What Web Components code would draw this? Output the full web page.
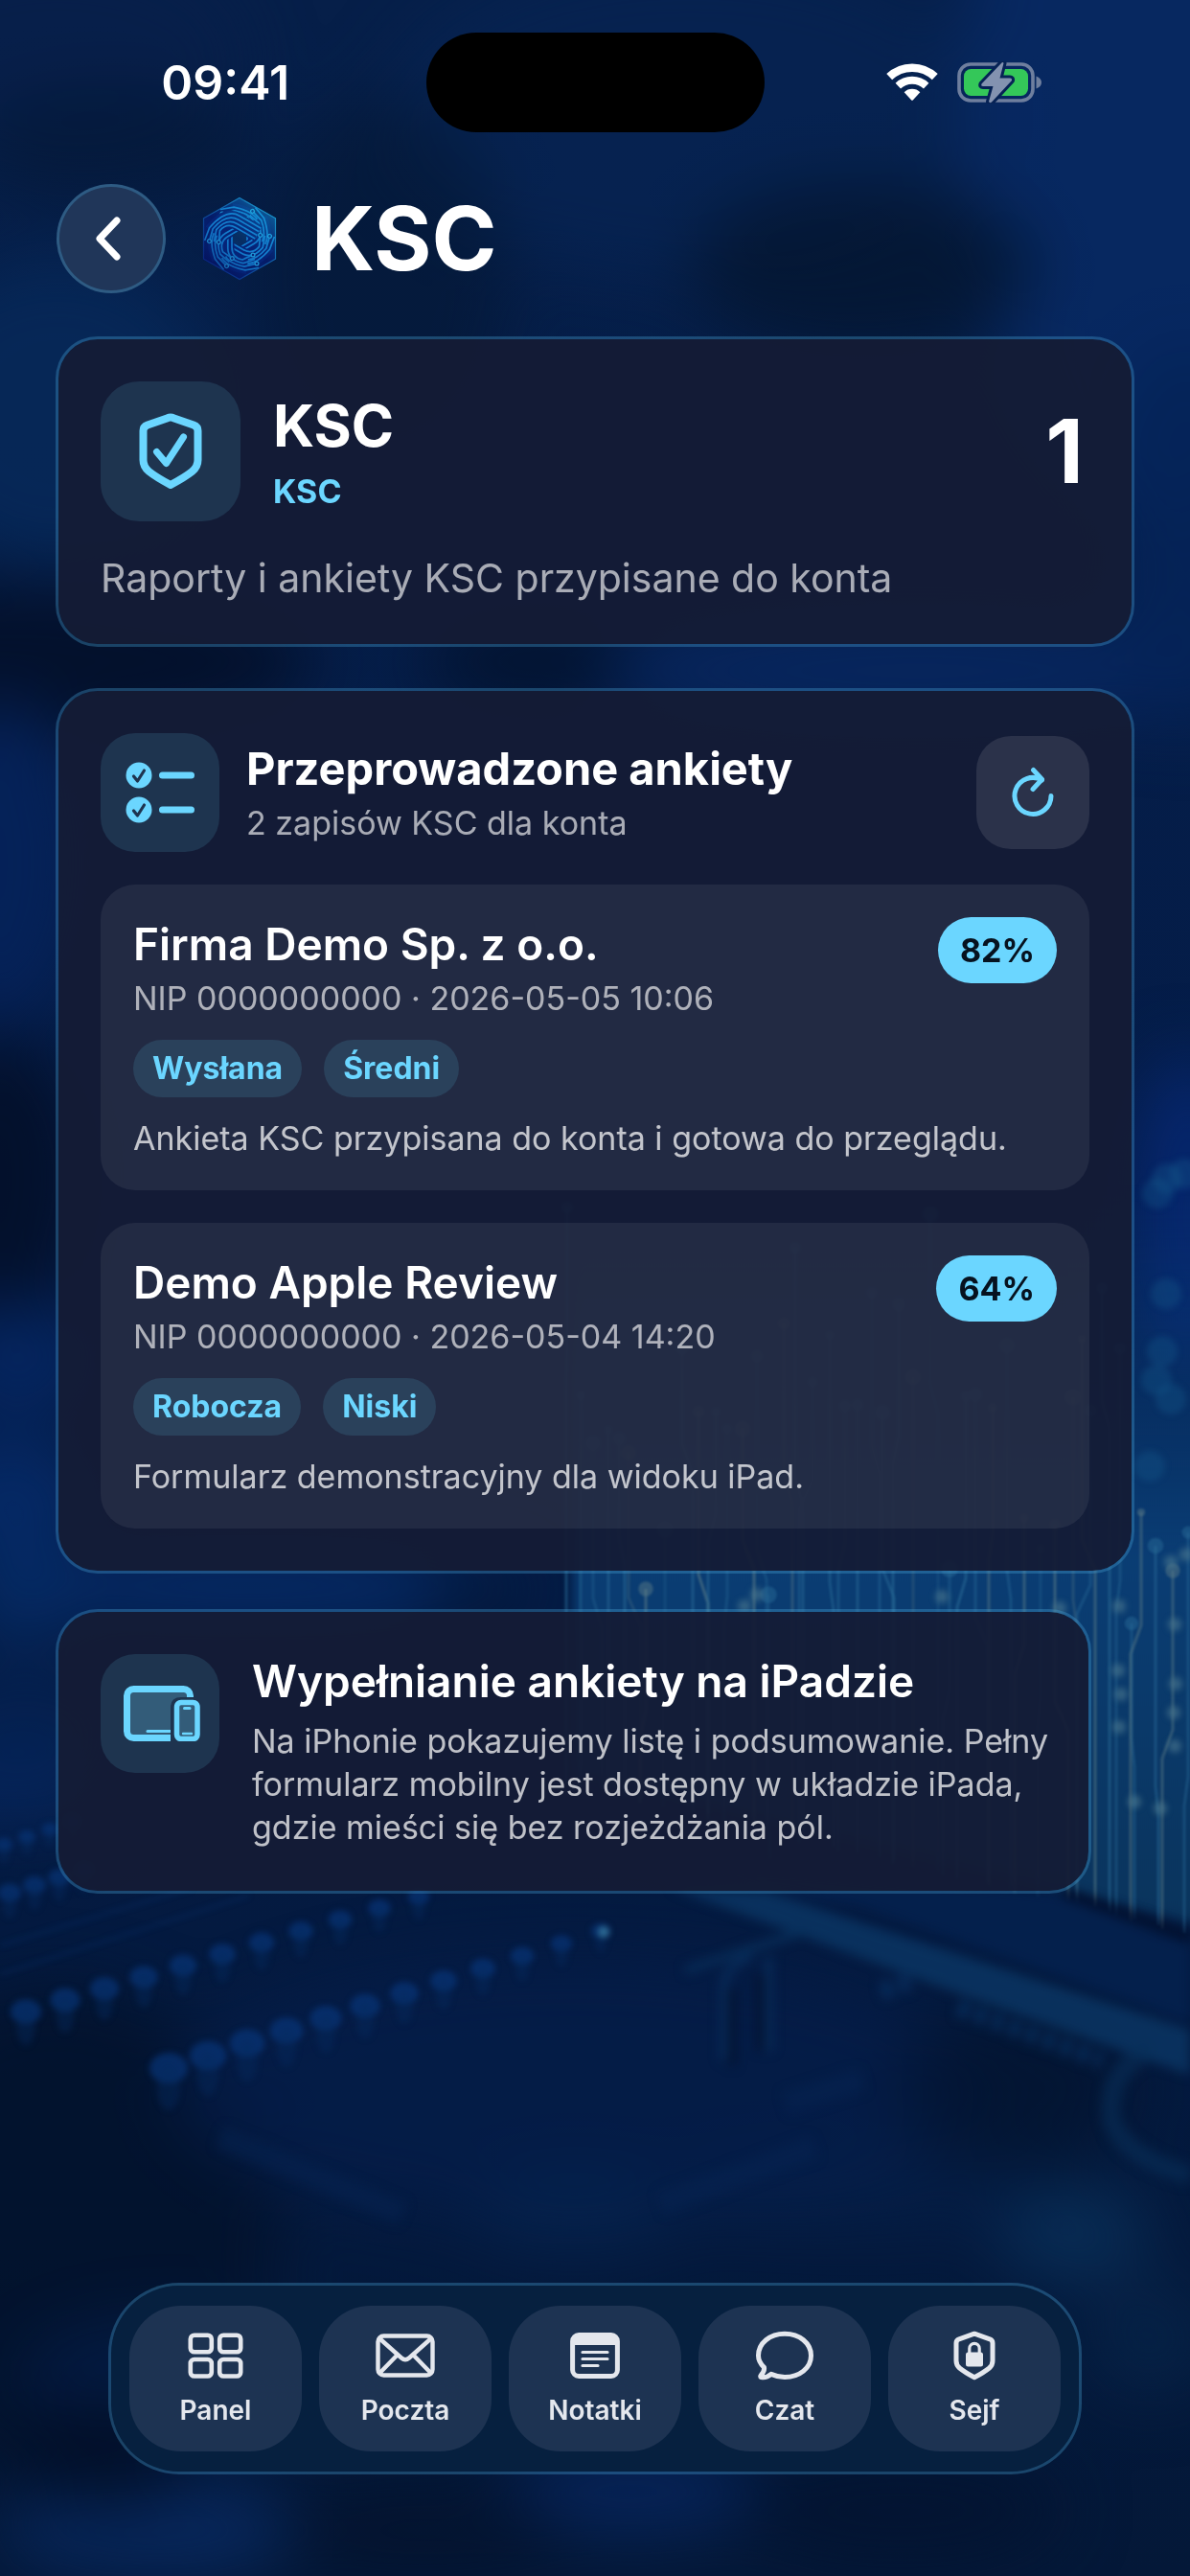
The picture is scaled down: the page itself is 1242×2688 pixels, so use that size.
<!DOCTYPE html>
<html lang="pl">
<head>
<meta charset="utf-8">
<meta name="viewport" content="width=device-width, initial-scale=1">
<title>KSC</title>
<style>
  html, body { margin: 0; }
  body {
    background: #04173a;
    color: #fff;
    font-family: Inter, "Liberation Sans", sans-serif;
    --cyan: #6bd6ff;
    --line: rgba(72, 165, 215, .34);
    --muted: rgba(255, 255, 255, .64);
    --soft: rgba(255, 255, 255, .73);
  }
</style>
</head>
<body>
<ksc-screen>
  <circuit-backdrop slot="backdrop"></circuit-backdrop>
  <status-bar slot="status" time="09:41"></status-bar>
  <page-header slot="header">KSC</page-header>

  <glass-card>
    <summary-block count="1">
      <icon-tile slot="icon" name="shield" size="large"></icon-tile>
      <span slot="title">KSC</span>
      <span slot="tag">KSC</span>
      <span slot="text">Raporty i ankiety KSC przypisane do konta</span>
    </summary-block>
  </glass-card>

  <glass-card>
    <survey-list>
      <icon-tile slot="icon" name="checklist"></icon-tile>
      <span slot="title">Przeprowadzone ankiety</span>
      <span slot="subtitle">2 zapisów KSC dla konta</span>
      <survey-item score="82%" tags="Wysłana,Średni">
        <span slot="title">Firma Demo Sp. z o.o.</span>
        <span slot="meta">NIP 0000000000 · 2026-05-05 10:06</span>
        <span slot="text">Ankieta KSC przypisana do konta i gotowa do przeglądu.</span>
      </survey-item>
      <survey-item score="64%" tags="Robocza,Niski">
        <span slot="title">Demo Apple Review</span>
        <span slot="meta">NIP 0000000000 · 2026-05-04 14:20</span>
        <span slot="text">Formularz demonstracyjny dla widoku iPad.</span>
      </survey-item>
    </survey-list>
  </glass-card>

  <glass-card class="hint" inset>
    <hint-block>
      <icon-tile slot="icon" name="devices"></icon-tile>
      <span slot="title">Wypełnianie ankiety na iPadzie</span>
      <span slot="text">Na iPhonie pokazujemy listę i podsumowanie. Pełny formularz mobilny jest dostępny w układzie iPada, gdzie mieści się bez rozjeżdżania pól.</span>
    </hint-block>
  </glass-card>

  <tab-bar slot="tabs">
    <tab-button icon="grid">Panel</tab-button>
    <tab-button icon="mail">Poczta</tab-button>
    <tab-button icon="note">Notatki</tab-button>
    <tab-button icon="chat">Czat</tab-button>
    <tab-button icon="lock">Sejf</tab-button>
  </tab-bar>
</ksc-screen>

<script>
const ICONS = {
  back: `<svg width="30" height="48" viewBox="0 0 30 48" fill="none" stroke="#fff" stroke-width="7" stroke-linecap="round" stroke-linejoin="round"><path d="M24 5 6 24l18 19"/></svg>`,
  shield: `<svg width="66" height="80" viewBox="0 0 66 80" fill="none" stroke="#6bd6ff" stroke-linecap="round" stroke-linejoin="round"><path stroke-width="8" d="M33 4.500 Q34.500 4.500 36 5.200L57 12.500Q61.500 14.200 61.500 18.500V49Q61.500 56 55.500 61Q48 67 33 75Q18 67 10.500 61Q4.500 56 4.500 49V18.500Q4.500 14.200 9 12.500L30 5.200Q31.500 4.500 33 4.500Z"/><path stroke-width="7" d="M18.500 40.500 28.500 52.500 46.500 25"/></svg>`,
  checklist: `<svg width="72" height="64" viewBox="0 0 72 64" fill="#6bd6ff"><circle cx="14" cy="14" r="13.500"/><circle cx="14" cy="50" r="13.500"/><rect x="35" y="10.500" width="37" height="7" rx="3.500"/><rect x="35" y="46.500" width="37" height="7" rx="3.500"/><g fill="none" stroke="#1e344f" stroke-width="3.200" stroke-linecap="round" stroke-linejoin="round"><path d="M8.500 15 12.500 20 19.500 9"/><path d="M8.500 51 12.500 56 19.500 45"/></g></svg>`,
  refresh: `<svg width="44" height="54" viewBox="0 0 44 54" fill="none" stroke="#6bd6ff" stroke-width="5" stroke-linecap="round" stroke-linejoin="round"><path d="M41 30.500a19 19 0 1 1-9.500-16.500"/><path d="M22.500 3.500 31.500 13.300 22 23.500"/></svg>`,
  devices: `<svg width="84" height="58" viewBox="-4 0 84 58"><rect x="3.500" y="3.500" width="66" height="51" rx="7" fill="#335c79" stroke="#6bd6ff" stroke-width="7"/><path d="M25 47.500H50" stroke="#6bd6ff" stroke-width="3" stroke-linecap="round"/><path d="M49 58V23Q49 12 60 12H80V58Z" fill="#1e344f"/><rect x="55.500" y="17.500" width="21.500" height="38" rx="4.500" fill="#335c79" stroke="#6bd6ff" stroke-width="5.500"/><path d="M63.500 23.500h5.500" stroke="#6bd6ff" stroke-width="3" stroke-linecap="round"/><path d="M62 50h9" stroke="#6bd6ff" stroke-width="2.400" stroke-linecap="round"/></svg>`,
  grid: `<svg width="58" height="48" viewBox="0 0 58 48" fill="none" stroke="#e4e7ed" stroke-width="4.600"><rect x="2.800" y="2.800" width="22" height="17.500" rx="4"/><rect x="33.200" y="2.800" width="22" height="17.500" rx="4"/><rect x="2.800" y="28" width="22" height="17.500" rx="4"/><rect x="33.200" y="28" width="22" height="17.500" rx="4"/></svg>`,
  mail: `<svg width="62" height="46" viewBox="0 0 62 46" fill="none" stroke="#e4e7ed" stroke-width="4.400" stroke-linejoin="round"><rect x="2.500" y="2.500" width="57" height="41" rx="6"/><path d="M4.500 5.500 27 25.500Q31 29 35 25.500L57.500 5.500M4.500 41 22.500 22.500M57.500 41 39.500 22.500"/></svg>`,
  note: `<svg width="52" height="48" viewBox="0 0 52 48" fill="none" stroke="#e4e7ed"><rect x="2.600" y="2.600" width="46.800" height="42.800" rx="6.500" stroke-width="5"/><path d="M3 8Q3 3 9 3H43Q49 3 49 8V13H3Z" fill="#e4e7ed" stroke="none"/><path stroke-width="3.200" stroke-linecap="round" d="M13 20.500H39M13 27.500H39M13 34.500H29"/></svg>`,
  chat: `<svg width="62" height="52" viewBox="0 0 62 52" fill="none" stroke="#e4e7ed" stroke-width="5" stroke-linejoin="round" stroke-linecap="round"><path d="M31 3.200C46.500 3.200 58.500 13 58.500 26S46.500 48.500 31 48.500C26 48.500 21 47.300 16.800 45.400C14 47.800 9.500 49.200 6.500 48.600C5.300 48.200 5.600 47.200 6.300 46.400C8.600 43.700 10 41.200 9.500 38.400C5.500 34.500 3.500 30.500 3.500 26C3.500 13 15.500 3.200 31 3.200Z"/></svg>`,
  lock: `<svg width="44" height="52" viewBox="0 0 44 52" fill="none" stroke="#e4e7ed"><path stroke-width="5" stroke-linejoin="round" d="M22 3.200 23.500 3.700 38 8.800Q41 10 41 13V31.500Q41 36 37.500 39Q32 43.500 22 48.800Q12 43.500 6.500 39Q3 36 3 31.500V13Q3 10 6 8.800L20.500 3.700Z"/><rect x="13" y="22.500" width="18" height="15" rx="2.500" fill="#e4e7ed" stroke="none"/><path stroke-width="3.200" d="M16.800 24V18.500a5.200 5.200 0 0 1 10.400 0V24"/></svg>`,
  wifi: `<svg width="54" height="40" viewBox="0 0 54 40" fill="none" stroke="#fff"><path stroke-width="8.500" d="M3.200 14.200A34.500 34.500 0 0 1 50.800 14.200"/><path stroke-width="8" d="M12.300 23.600A21.500 21.500 0 0 1 41.700 23.600"/><path fill="#fff" stroke="none" d="M18.700 30.200A11.800 11.800 0 0 1 35.300 30.200L28 38.200Q27 39.200 26 38.200Z"/></svg>`,
  battery: `<svg width="90" height="44" viewBox="0 0 90 44"><rect x="2" y="3" width="77" height="38" rx="12" fill="none" stroke="#6f7f9e" stroke-width="3.600"/><rect x="7" y="8" width="67" height="28" rx="7.500" fill="#34c759"/><path d="M82.500 15.500Q88 17.500 88 22T82.500 28.500Z" fill="#6f7f9e"/><path d="M46.500 1.500 25.500 23.500Q24.500 26 27 26H37.500L33 42Q34 44 36 42.500L57 20Q57.500 17.500 55 17.500H44.500L48.500 2Q48 .5 46.500 1.500Z" fill="#8392b0" stroke="#062255" stroke-width="6" paint-order="stroke" stroke-linejoin="round"/></svg>`
};

/** Attaches an open shadow root filled with the given styles and markup. */
function render(host, css, html) {
  const template = document.createElement('template');
  template.innerHTML = `<style>*{box-sizing:border-box}svg{display:block;flex:none}${css}</style>${html}`;
  host.attachShadow({ mode: 'open' }).append(template.content.cloneNode(true));
}

class KscScreen extends HTMLElement {
  constructor() {
    super();
    render(this, `
      :host { display: flex; flex-direction: column; position: relative; min-height: 100vh; overflow: hidden; isolation: isolate; }
      main { display: flex; flex-direction: column; gap: 43px; padding: 45px 58px; }
      ::slotted(.hint) { margin-top: -6px; }
      footer { margin-top: auto; padding: 0 113px 106px; }
    `, `
      <slot name="backdrop"></slot>
      <slot name="status"></slot>
      <slot name="header"></slot>
      <main><slot></slot></main>
      <footer><slot name="tabs"></slot></footer>
    `);
  }
}

class CircuitBackdrop extends HTMLElement {
  constructor() {
    super();
    let seed = 11;
    const rnd = () => (seed = (seed * 16807) % 2147483647) / 2147483647;

    // Soft colour clouds: [x, y, rx, ry, colour, opacity]
    const clouds = [
      [60, 60, 200, 120, '#081f4b', .6], [720, 120, 320, 170, '#072455', .6], [1200, 120, 200, 420, '#082a66', .8],
      [400, 290, 130, 190, '#04152f', .5], [900, 280, 180, 90, '#04152f', .75], [120, 150, 150, 60, '#04162f', .5],
      [60, 430, 170, 160, '#06295a', .8], [0, 690, 330, 80, '#031029', .9], [560, 690, 120, 50, '#03122c', .8],
      [960, 700, 330, 60, '#07265e', .95], [1240, 560, 90, 200, '#062358', .9], [0, 900, 90, 170, '#06225a', .9],
      [0, 1230, 90, 150, '#031029', .9], [20, 1420, 80, 60, '#05255f', 1], [10, 1560, 90, 60, '#062a68', .9],
      [260, 1655, 300, 40, '#062b68', .9], [500, 1668, 60, 20, '#031026', .8], [20, 1660, 60, 60, '#062c66', .7], [1240, 1270, 60, 170, '#062770', .95],
      [30, 1800, 110, 60, '#052252', .8], [0, 1870, 120, 40, '#062a66', .6],
      [60, 2330, 230, 260, '#03122b', .8], [600, 2180, 420, 140, '#051d48', .8], [1060, 2180, 120, 90, '#03142f', .7],
      [600, 2310, 110, 40, '#072654', .6], [1120, 2330, 80, 50, '#0a3460', .7], [900, 2290, 200, 40, '#06224e', .5],
      [180, 2480, 160, 60, '#051e4a', .8], [160, 2640, 160, 50, '#07285e', .95], [660, 2600, 140, 44, '#06245a', .95],
      [110, 2560, 90, 60, '#020d24', .7], [440, 2640, 150, 50, '#031029', .6], [940, 2620, 170, 60, '#03132f', .7], [1200, 2440, 70, 60, '#07254a', .7]
    ].map(([x, y, rx, ry, c, o]) => `<ellipse cx="${x}" cy="${y}" rx="${rx}" ry="${ry}" fill="${c}" opacity="${o}"/>`).join('');

    // Vertical circuit traces on the upright board
    let traces = '';
    for (let x = 592; x < 1242; x += 9 + rnd() * 11) {
      const top = x < 1180 ? 1260 + rnd() * 420 : 1560 + rnd() * 140;
      const bottom = 1860 + (x - 584) * .24;
      const jog = (rnd() - .5) * 30;
      const mid = top + 100 + rnd() * 160;
      const tint = rnd() > .7 ? '#5f7f88' : '#2a6c98';
      traces += `<path d="M${x | 0} ${top | 0}V${mid | 0}l${jog | 0} 30V${bottom | 0}" stroke="${tint}" stroke-width="3" opacity="${(.25 + rnd() * .3).toFixed(2)}"/>
        <circle cx="${x | 0}" cy="${top | 0}" r="${(4 + rnd() * 5).toFixed(1)}" fill="${tint}" opacity=".45"/>`;
    }
    let spots = '';
    [[1218, 1230], [1208, 1245], [1236, 1225], [1217, 1350], [1213, 1410], [1207, 1440], [1222, 1460], [1200, 1530], [1222, 1630], [1238, 1622], [1168, 1676], [1226, 1695], [1167, 1743], [1170, 1768], [1168, 1802], [1227, 1757], [1225, 1787], [1226, 1822], [1184, 1880], [1211, 1887], [983, 1666], [790, 1664], [777, 1676], [1106, 1678]]
      .forEach(([x, y]) => { const far = y < 1560; spots += `<circle cx="${x}" cy="${y}" r="${far ? 16 : 7}" fill="${far ? '#155a8c' : '#4d7a90'}" opacity="${far ? .35 : .6}"/>`; });

    // Receding rows of lit solder pads
    let pads = '';
    const row = (x, y, dx, dy, n, r, shrink) => {
      for (let i = 0; i < n; i++) {
        const s = r - shrink * i;
        pads += `<ellipse cx="${x + dx * i}" cy="${y + dy * i}" rx="${s}" ry="${s * .8}" fill="#083880" opacity=".62"/>
          <ellipse cx="${x + dx * i}" cy="${y + dy * i + s}" rx="${s * .6}" ry="${s * 1.2}" fill="#062a60" opacity=".4"/>`;
      }
    };
    row(27, 2099, 41, -12, 11, 16, .5);
    row(176, 2158, 41, -13, 12, 20, .9);
    row(10, 1975, 26, -8, 4, 12, .3);
    row(4, 1925, 24, -8, 4, 9, .3);

    render(this, `
      :host { display: block; position: absolute; inset: 0; z-index: -1; }
      svg { width: 100%; height: 100%; }
    `, `
      <svg viewBox="0 0 1242 2688" preserveAspectRatio="xMidYMid slice" aria-hidden="true">
        <defs>
          <filter id="b40" x="-20%" y="-20%" width="140%" height="140%" color-interpolation-filters="sRGB"><feGaussianBlur stdDeviation="34"/></filter>
          <filter id="b6" x="-20%" y="-20%" width="140%" height="140%" color-interpolation-filters="sRGB"><feGaussianBlur stdDeviation="6"/></filter>
          <filter id="b3" x="-20%" y="-20%" width="140%" height="140%" color-interpolation-filters="sRGB"><feGaussianBlur stdDeviation="3"/></filter>
          <filter id="b1" x="-20%" y="-20%" width="140%" height="140%" color-interpolation-filters="sRGB"><feGaussianBlur stdDeviation="1"/></filter>
          <linearGradient id="base" x2="0" y2="1"><stop offset="0" stop-color="#061f49"/><stop offset=".5" stop-color="#041c48"/><stop offset="1" stop-color="#041838"/></linearGradient>
          <linearGradient id="board" x2="0" y2="1"><stop offset="0" stop-color="#0a3c78" stop-opacity="0"/><stop offset=".5" stop-color="#0a3d74"/><stop offset="1" stop-color="#0a345c"/></linearGradient>
        </defs>
        <rect width="1242" height="2688" fill="url(#base)"/>
        <g filter="url(#b40)">${clouds}</g>
        <path d="M598 1240H1260V2010L598 1850Z" fill="url(#board)" filter="url(#b6)"/>
        <g fill="none" filter="url(#b1)">${traces}</g>
        <g filter="url(#b3)">${spots}</g>
        <g filter="url(#b6)">
          <path d="M560 1930 1100 1975 1242 2030V2110L900 1990Z" fill="#04204c"/>
          <path d="M700 1970 800 1974 1242 2118V2165L1000 2080Z" fill="#0a3563" opacity=".85"/>
          <path d="M1110 1975 1242 2022" stroke="#020f2c" stroke-width="10"/>
          <path d="M715 2056 840 2015" stroke="#08305c" stroke-width="7"/>
          <path d="M756 2150V2070Q758 2050 785 2042M802 2140V2042" fill="none" stroke="#082c5a" stroke-width="8"/>
          <path d="M764 2155V2075M794 2140V2060" stroke="#020f2a" stroke-width="7"/>
          <path d="M920 2078 955 2066M1000 2095 1150 2150" stroke="#0a386c" stroke-width="18" stroke-dasharray="12 7" opacity=".6"/>
          <path d="M1242 2270Q1170 2250 1160 2210 1155 2160 1200 2140" fill="none" stroke="#092f58" stroke-width="20" opacity=".6"/>
          <path d="M230 2230 420 2310 M820 2195 900 2170M690 2300 850 2240" stroke="#062452" stroke-width="24" opacity=".5"/>
        </g>
        <g filter="url(#b3)">${pads}<circle cx="630" cy="2016" r="6" fill="#3f86a8" opacity=".7"/></g>
        <g stroke="#0a3470" stroke-width="3" opacity=".4" filter="url(#b3)"><path d="M0 2060 260 1978M0 2030 200 1970"/></g>
      </svg>
    `);
  }
}

class StatusBar extends HTMLElement {
  constructor() {
    super();
    render(this, `
      :host { display: grid; grid-template-columns: 1fr 353px 1fr; align-items: center; padding-top: 34px; }
      time { justify-self: center; padding-left: 26px; font-size: 50px; font-weight: 600; line-height: 60px; }
      .island { height: 104px; border-radius: 52px; background: #000; }
      .signals { display: flex; align-items: center; justify-content: center; gap: 20px; padding-right: 26px; }
    `, `
      <time>${this.getAttribute('time')}</time>
      <div class="island"></div>
      <div class="signals">${ICONS.wifi}${ICONS.battery}</div>
    `);
  }
}

class BrandMark extends HTMLElement {
  constructor() {
    super();
    // One circuit lane of a swirl arm; k is its distance from the hub
    const lane = k => `M${8 + k * 4.2} 14V${-9 - k}Q${8 + k * 4.2} ${-20 - k * 2.6} ${-3 - k} ${-22 - k * 3.6}L${-14 - k * 2} ${-17 - k * 4.5}`;
    const arm = [0, 60, 120, 180, 240, 300].map(a => `
      <g transform="rotate(${a})">
        <path d="M14.500 14V-11Q14.500 -25 -8 -28" stroke="#05186a" stroke-width="18"/>
        <path d="${lane(0)}${lane(1)}${lane(2)}${lane(3)}" stroke="#1583d0" stroke-width="1.700"/>
        <circle cx="-14" cy="-17" r="1.900" fill="#061c70" stroke="#25a5dc" stroke-width="1.300"/>
        <circle cx="-18" cy="-26" r="1.900" fill="#061c70" stroke="#25a5dc" stroke-width="1.300"/>
      </g>`).join('');
    render(this, `:host { display: block; flex: none; }`, `
      <svg width="86" height="88" viewBox="-43 -44 86 88" fill="none" aria-hidden="true">
        <defs>
          <clipPath id="hex"><path d="M0-43 38-21.500V21.500L0 43-38 21.500V-21.500Z"/></clipPath>
          <linearGradient id="edge" x1="1" y1="0" x2="0" y2="1"><stop stop-color="#1fb4e2"/><stop offset="1" stop-color="#06187a"/></linearGradient>
          <linearGradient id="tint" x1=".9" y1=".1" x2=".2" y2="1"><stop stop-color="#17c5e8" stop-opacity=".5"/><stop offset=".5" stop-color="#0a60c0" stop-opacity=".14"/><stop offset="1" stop-color="#03024a" stop-opacity=".6"/></linearGradient>
        </defs>
        <g clip-path="url(#hex)"><path d="M-43-44H43V44H-43Z" fill="#04105a"/>${arm}<path d="M0-8 7-4V4L0 8-7 4V-4Z" fill="#062452"/><path d="M-43-44H43V44H-43Z" fill="url(#tint)"/></g>
        <path d="M0-42.500 37.500-21.200V21.200L0 42.500-37.500 21.200V-21.200Z" stroke="url(#edge)" stroke-width="1.200" opacity=".8"/>
      </svg>`);
  }
}

class PageHeader extends HTMLElement {
  constructor() {
    super();
    render(this, `
      :host { display: flex; align-items: center; gap: 32px; padding: 54px 59px 0; }
      button { display: grid; place-items: center; width: 114px; height: 114px; padding: 0 6px 0 0; border: 3px solid var(--line); border-radius: 50%; background: #203659; }
      brand-mark { margin-left: 2px; }
      h1 { margin: 0; font-size: 92px; line-height: 114px; font-weight: 700; }
    `, `
      <button type="button" aria-label="Wstecz">${ICONS.back}</button>
      <brand-mark></brand-mark>
      <h1><slot></slot></h1>
    `);
  }
}

class GlassCard extends HTMLElement {
  constructor() {
    super();
    render(this, `
      :host { display: block; padding: 44px; border: 3px solid var(--line); border-radius: 44px; background: rgba(20, 28, 53, .94); background-clip: padding-box; }
      :host([inset]) { margin-right: 45px; padding-right: 36px; }
    `, `<slot></slot>`);
  }
}

class IconTile extends HTMLElement {
  constructor() {
    super();
    render(this, `
      :host { display: grid; place-items: center; flex: none; width: 124px; height: 124px; border-radius: 36px; background: #1e344f; }
      :host([size=large]) { width: 146px; height: 146px; border-radius: 40px; }
    `, ICONS[this.getAttribute('name')]);
  }
}

class SummaryBlock extends HTMLElement {
  constructor() {
    super();
    render(this, `
      :host { display: flex; flex-direction: column; gap: 34px; }
      .row { display: flex; align-items: center; gap: 34px; }
      .names { flex: 1; display: flex; flex-direction: column; gap: 12px; }
      h2, p { margin: 0; }
      h2 { font-size: 60px; line-height: 72px; font-weight: 700; }
      .tag { color: var(--cyan); font-size: 34px; line-height: 42px; font-weight: 700; }
      .count { padding-right: 6px; font-size: 92px; line-height: 114px; font-weight: 700; }
      .text { color: var(--muted); font-size: 41px; line-height: 50px; }
    `, `
      <div class="row">
        <slot name="icon"></slot>
        <div class="names"><h2><slot name="title"></slot></h2><p class="tag"><slot name="tag"></slot></p></div>
        <strong class="count">${this.getAttribute('count')}</strong>
      </div>
      <p class="text"><slot name="text"></slot></p>
    `);
  }
}

class SurveyList extends HTMLElement {
  constructor() {
    super();
    render(this, `
      :host { display: flex; flex-direction: column; gap: 34px; }
      header { display: flex; align-items: center; gap: 28px; }
      .names { flex: 1; display: flex; flex-direction: column; gap: 8px; }
      h2, p { margin: 0; }
      h2 { font-size: 47px; line-height: 56px; font-weight: 700; }
      p { color: var(--muted); font-size: 34px; line-height: 42px; }
      button { display: grid; place-items: center; width: 118px; height: 118px; padding: 0; border: 0; border-radius: 36px; background: rgba(255, 255, 255, .1); }
    `, `
      <header>
        <slot name="icon"></slot>
        <div class="names"><h2><slot name="title"></slot></h2><p><slot name="subtitle"></slot></p></div>
        <button type="button" aria-label="Odśwież">${ICONS.refresh}</button>
      </header>
      <slot></slot>
    `);
  }
}

class SurveyItem extends HTMLElement {
  constructor() {
    super();
    const tags = this.getAttribute('tags').split(',').map(t => `<li>${t}</li>`).join('');
    render(this, `
      :host { display: flex; flex-direction: column; gap: 22px; padding: 34px 34px 33px; border-radius: 36px; background: rgba(255, 255, 255, .065); }
      header { display: flex; align-items: flex-start; gap: 24px; }
      .names { flex: 1; display: flex; flex-direction: column; gap: 8px; }
      h3, p, ul { margin: 0; padding: 0; }
      h3 { font-size: 46px; line-height: 56px; font-weight: 600; }
      .meta { color: var(--muted); font-size: 34px; line-height: 42px; }
      .score { padding: 0 23px; border-radius: 35px; background: var(--cyan); color: #06121f; font-size: 34px; line-height: 69px; font-weight: 700; }
      ul { display: flex; gap: 23px; list-style: none; }
      li { padding: 0 20px; border-radius: 30px; background: #2a415b; color: var(--cyan); font-size: 32px; line-height: 60px; font-weight: 700; }
      .text { color: var(--soft); font-size: 34px; line-height: 42px; }
    `, `
      <header>
        <div class="names"><h3><slot name="title"></slot></h3><p class="meta"><slot name="meta"></slot></p></div>
        <span class="score">${this.getAttribute('score')}</span>
      </header>
      <ul>${tags}</ul>
      <p class="text"><slot name="text"></slot></p>
    `);
  }
}

class HintBlock extends HTMLElement {
  constructor() {
    super();
    render(this, `
      :host { display: flex; align-items: flex-start; gap: 34px; }
      .body { flex: 1; display: flex; flex-direction: column; gap: 12px; }
      h2, p { margin: 0; }
      h2 { font-size: 46px; line-height: 56px; font-weight: 600; }
      p { color: var(--soft); font-size: 34px; line-height: 45px; }
    `, `
      <slot name="icon"></slot>
      <div class="body"><h2><slot name="title"></slot></h2><p><slot name="text"></slot></p></div>
    `);
  }
}

class TabBar extends HTMLElement {
  constructor() {
    super();
    render(this, `
      :host { display: block; }
      nav { display: flex; gap: 18px; padding: 21px 19px; border: 3px solid var(--line); border-radius: 74px; background: #06203f; background-clip: padding-box; }
      ::slotted(*) { flex: 1; }
    `, `<nav aria-label="Główna nawigacja"><slot></slot></nav>`);
  }
}

class TabButton extends HTMLElement {
  constructor() {
    super();
    render(this, `
      :host { display: flex; min-width: 0; }
      button { flex: 1; display: flex; flex-direction: column; align-items: center; justify-content: center; gap: 12px; height: 152px; padding: 0; border: 0; border-radius: 54px; background: #1d3352; color: #e4e7ed; font: 600 28px/36px Inter, "Liberation Sans", sans-serif; }
      .icon { display: grid; place-items: center; height: 54px; }
    `, `<button type="button"><span class="icon">${ICONS[this.getAttribute('icon')]}</span><span><slot></slot></span></button>`);
  }
}

customElements.define('ksc-screen', KscScreen);
customElements.define('circuit-backdrop', CircuitBackdrop);
customElements.define('status-bar', StatusBar);
customElements.define('brand-mark', BrandMark);
customElements.define('page-header', PageHeader);
customElements.define('glass-card', GlassCard);
customElements.define('icon-tile', IconTile);
customElements.define('summary-block', SummaryBlock);
customElements.define('survey-list', SurveyList);
customElements.define('survey-item', SurveyItem);
customElements.define('hint-block', HintBlock);
customElements.define('tab-bar', TabBar);
customElements.define('tab-button', TabButton);
</script>
</body>
</html>
